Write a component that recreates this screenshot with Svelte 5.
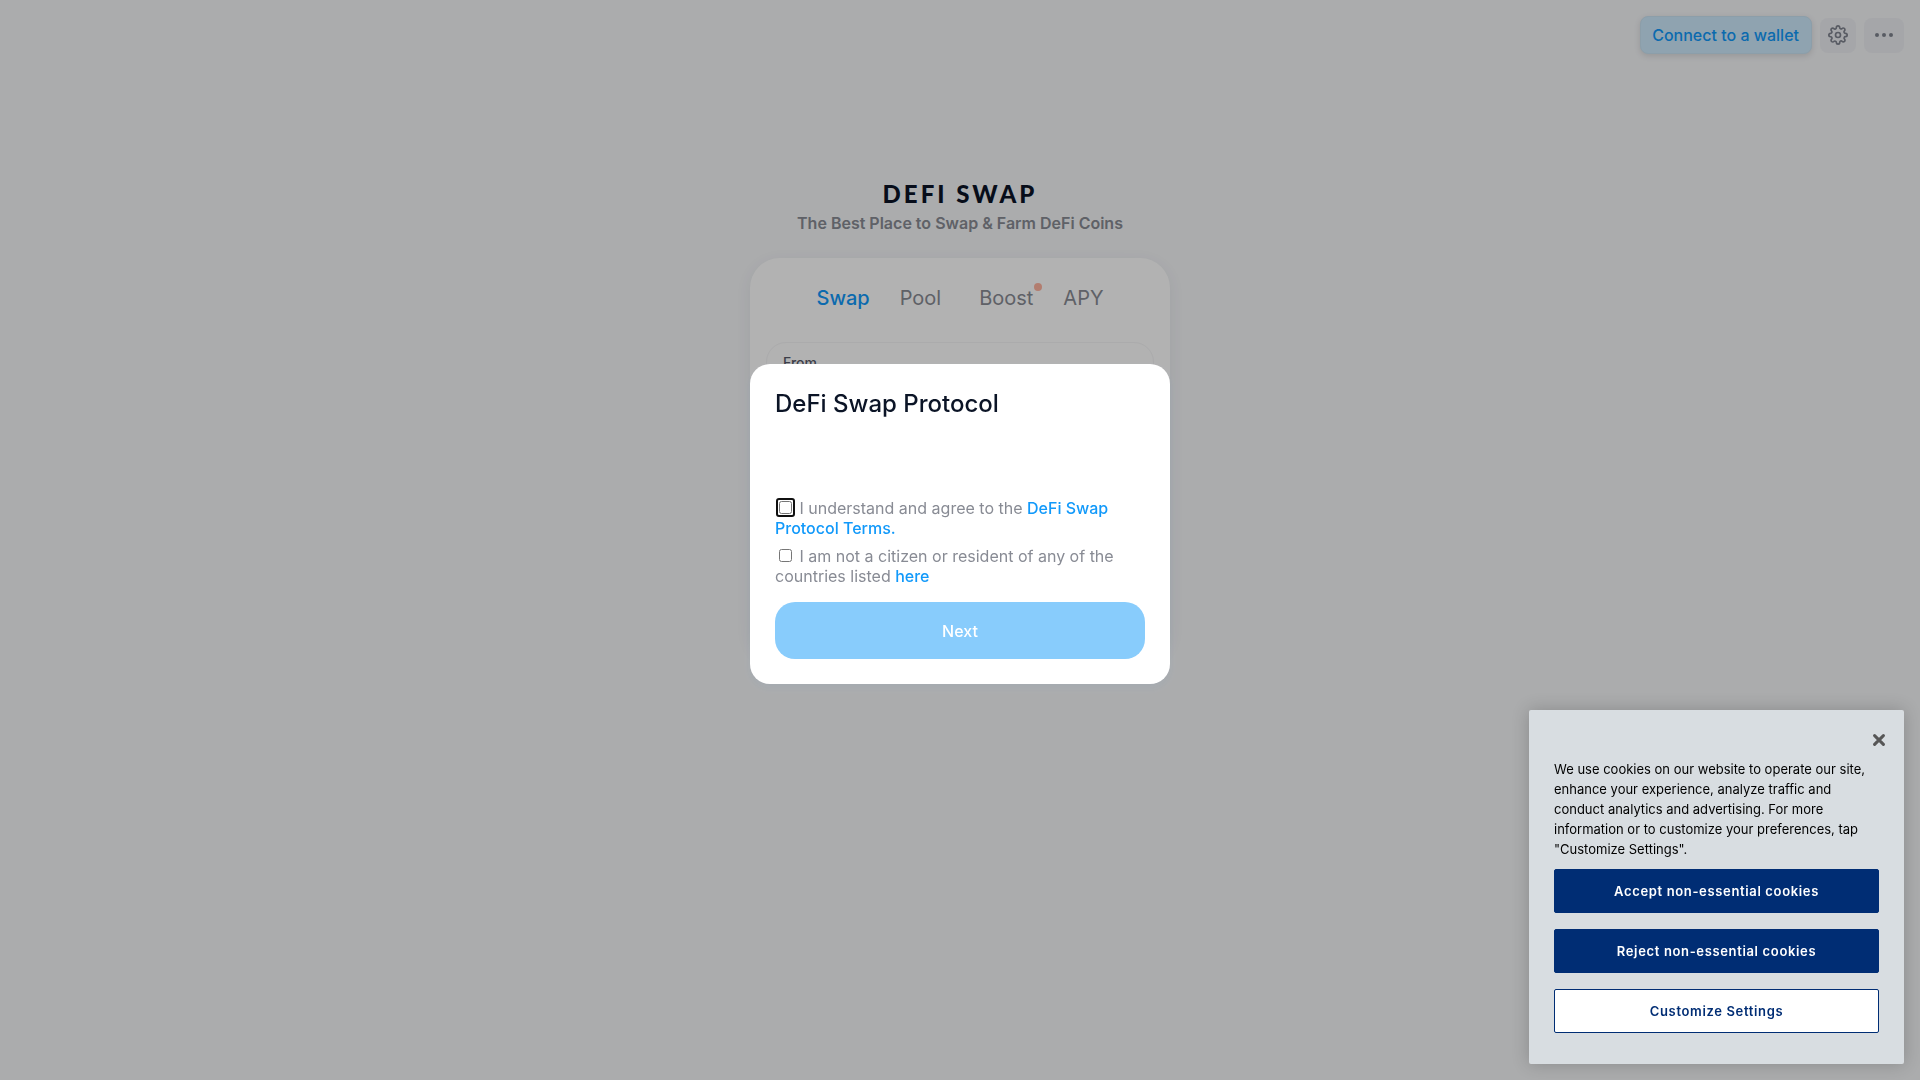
<script>
  import { onMount } from 'svelte';

  let agreed = $state(false);
  let eligible = $state(false);
  let cookiesOpen = $state(true);
  let termsBox;

  const tabs = [
    { label: 'Swap', active: true },
    { label: 'Pool' },
    { label: 'Boost', dot: true },
    { label: 'APY' }
  ];

  onMount(() => termsBox.focus());
</script>

<div class="page">
  <header>
    <button class="connect" type="button">Connect to a wallet</button>
    <button class="icon-button gear" type="button" aria-label="Settings">
      <svg width="20" height="20" viewBox="0 0 24 24" fill="none" stroke="currentColor" stroke-width="2" stroke-linecap="round" stroke-linejoin="round">
        <circle cx="12" cy="12" r="3" />
        <path d="M19.4 15a1.65 1.65 0 0 0 .33 1.82l.06.06a2 2 0 0 1 0 2.83 2 2 0 0 1-2.83 0l-.06-.06a1.65 1.65 0 0 0-1.82-.33 1.65 1.65 0 0 0-1 1.51V21a2 2 0 0 1-2 2 2 2 0 0 1-2-2v-.09A1.65 1.65 0 0 0 9 19.4a1.65 1.65 0 0 0-1.82.33l-.06.06a2 2 0 0 1-2.83 0 2 2 0 0 1 0-2.83l.06-.06a1.65 1.65 0 0 0 .33-1.82 1.65 1.65 0 0 0-1.51-1H3a2 2 0 0 1-2-2 2 2 0 0 1 2-2h.09A1.65 1.65 0 0 0 4.6 9a1.65 1.65 0 0 0-.33-1.82l-.06-.06a2 2 0 0 1 0-2.83 2 2 0 0 1 2.83 0l.06.06a1.65 1.65 0 0 0 1.82.33H9a1.65 1.65 0 0 0 1-1.51V3a2 2 0 0 1 2-2 2 2 0 0 1 2 2v.09a1.65 1.65 0 0 0 1 1.51 1.65 1.65 0 0 0 1.82-.33l.06-.06a2 2 0 0 1 2.83 0 2 2 0 0 1 0 2.83l-.06.06a1.65 1.65 0 0 0-.33 1.82V9a1.65 1.65 0 0 0 1.51 1H21a2 2 0 0 1 2 2 2 2 0 0 1-2 2h-.09a1.65 1.65 0 0 0-1.51 1z" />
      </svg>
    </button>
    <button class="icon-button more" type="button" aria-label="More">
      <svg width="20" height="20" viewBox="0 0 20 20" fill="currentColor">
        <circle cx="3" cy="10" r="2" />
        <circle cx="10" cy="10" r="2" />
        <circle cx="17" cy="10" r="2" />
      </svg>
    </button>
  </header>

  <main>
    <h1>DEFI SWAP</h1>
    <p class="tagline">The Best Place to Swap &amp; Farm DeFi Coins</p>
    <section class="card">
      <nav>
        {#each tabs as tab}
          <a href="#{tab.label.toLowerCase()}" class:active={tab.active} class:dotted={tab.dot}>
            {tab.label}{#if tab.dot}<span class="dot"></span>{/if}
          </a>
        {/each}
      </nav>
      <div class="field"><span>From</span></div>
    </section>
  </main>
</div>

<div class="overlay">
  <div class="modal" role="dialog" aria-modal="true" aria-labelledby="modal-title">
    <h2 id="modal-title">DeFi Swap Protocol</h2>
    <div class="term">
      <input id="terms" type="checkbox" bind:this={termsBox} bind:checked={agreed} />
      <label for="terms">I understand and agree to the <a href="#terms-page">DeFi Swap Protocol Terms.</a></label>
    </div>
    <div class="term">
      <input id="citizen" type="checkbox" bind:checked={eligible} />
      <label for="citizen">I am not a citizen or resident of any of the countries listed <a href="#countries">here</a></label>
    </div>
    <button class="next" class:ready={agreed && eligible} type="button">Next</button>
  </div>
</div>

{#if cookiesOpen}
  <aside class="cookies" aria-label="Cookie preferences">
    <button class="close" type="button" aria-label="Close" onclick={() => (cookiesOpen = false)}>
      <svg width="12" height="12" viewBox="0 0 12 12" fill="none" stroke="#565656" stroke-width="3" stroke-linecap="round">
        <path d="M1.6 1.6 10.4 10.4M10.4 1.6 1.6 10.4" />
      </svg>
    </button>
    <p>We use cookies on our website to operate our site, enhance your experience, analyze traffic and conduct analytics and advertising. For more information or to customize your preferences, tap "Customize Settings".</p>
    <div class="choices">
      <button type="button">Accept non-essential cookies</button>
      <button type="button">Reject non-essential cookies</button>
      <button class="plain" type="button">Customize Settings</button>
    </div>
  </aside>
{/if}

<style>
  :global(body) {
    margin: 0;
    background: #f5f6f8;
    font-family: Inter, "Liberation Sans", sans-serif;
    font-size: 16px;
  }
  button {
    font-family: inherit;
    border: 0;
    padding: 0;
    cursor: pointer;
  }
  a {
    text-decoration: none;
  }
  h1, h2, p {
    margin: 0;
  }

  .page {
    height: 100vh;
    overflow: hidden;
  }
  header {
    display: flex;
    justify-content: flex-end;
    align-items: center;
    gap: 8px;
    padding: 16px;
  }
  .connect {
    height: 38px;
    padding: 0 12px 0 11px;
    border: 1px solid #c9e2f2;
    border-radius: 8px;
    background: #cdeafd;
    color: #1199fa;
    font-size: 16px;
    font-weight: 500;
    box-shadow: 0 2px 6px rgba(0, 0, 0, 0.12);
  }
  .icon-button {
    display: flex;
    align-items: center;
    justify-content: center;
    height: 35px;
    border-radius: 8px;
    background: #edeef2;
    color: #7f838f;
  }
  .gear {
    width: 36px;
  }
  .more {
    width: 40px;
  }

  main {
    display: flex;
    flex-direction: column;
    align-items: center;
    padding: 111px 16px 0;
  }
  h1 {
    font-family: Lato, sans-serif;
    font-size: 24px;
    line-height: 26px;
    font-weight: 900;
    letter-spacing: 3px;
    color: #0b1426;
  }
  .tagline {
    margin-top: 4px;
    font-weight: 600;
    line-height: 24px;
    color: #888b94;
  }
  .card {
    box-sizing: border-box;
    width: 100%;
    max-width: 420px;
    height: 400px;
    margin-top: 23px;
    padding: 24px 16px;
    border-radius: 30px;
    background: #fff;
    box-shadow: 0 4px 16px rgba(30, 50, 90, 0.07);
  }
  nav {
    display: flex;
    justify-content: center;
    gap: 30px;
    font-size: 20px;
    line-height: 32px;
  }
  nav a {
    position: relative;
    color: #888b94;
  }
  nav a.dotted {
    padding-left: 8px;
  }
  nav a.active {
    font-weight: 500;
    color: #1199fa;
  }
  .dot {
    position: absolute;
    top: 1px;
    right: -9px;
    width: 8px;
    height: 8px;
    border-radius: 50%;
    background: #ffb4a0;
  }
  .field {
    height: 90px;
    margin-top: 28px;
    padding: 11px 16px;
    border: 1px solid #f5f5f7;
    border-radius: 20px;
    color: #565a69;
    font-size: 14px;
    line-height: 18px;
    font-weight: 500;
  }

  .overlay {
    position: fixed;
    inset: 0;
    display: flex;
    align-items: center;
    justify-content: center;
    padding: 0 16px 32px;
    background: rgba(0, 0, 0, 0.3);
  }
  .modal {
    box-sizing: border-box;
    width: 100%;
    max-width: 420px;
    padding: 25px;
    border-radius: 20px;
    background: #fff;
    box-shadow: 0 4px 8px rgba(47, 128, 237, 0.05);
  }
  h2 {
    margin-bottom: 79px;
    font-size: 24px;
    line-height: 30px;
    font-weight: 500;
    color: #0b1426;
  }
  .term {
    margin-bottom: 8px;
    line-height: 20px;
    color: #888b94;
  }
  .term input {
    width: 13px;
    height: 13px;
    margin: 3px 3px 3px 4px;
  }
  .term a {
    color: #1199fa;
    font-weight: 500;
  }
  .next {
    display: block;
    width: 100%;
    height: 57px;
    margin-top: 16px;
    border-radius: 20px;
    background: #88ccfc;
    color: #fff;
    font-size: 16px;
    font-weight: 500;
  }
  .next.ready {
    background: #1199fa;
  }

  .cookies {
    position: fixed;
    right: 16px;
    bottom: 16px;
    box-sizing: border-box;
    width: 375px;
    max-width: calc(100vw - 32px);
    padding: 24px 19px 31px;
    border-radius: 2px;
    background: #d8dde1;
    box-shadow: 0 0 18px rgba(0, 0, 0, 0.2);
  }
  .close {
    display: block;
    margin-left: auto;
    height: 12px;
    background: none;
  }
  .close svg {
    display: block;
  }
  .cookies p {
    margin: 13px 6px 10px;
    font-size: 13px;
    line-height: 20px;
    color: #000;
  }
  .choices {
    display: flex;
    flex-direction: column;
    gap: 16px;
    margin: 0 6px;
  }
  .choices button {
    height: 44px;
    border: 1px solid #002d74;
    border-radius: 2px;
    background: #002d74;
    color: #fff;
    font-size: 13px;
    font-weight: 600;
    letter-spacing: 0.05em;
  }
  .choices .plain {
    background: #fff;
    color: #002d74;
  }
</style>
